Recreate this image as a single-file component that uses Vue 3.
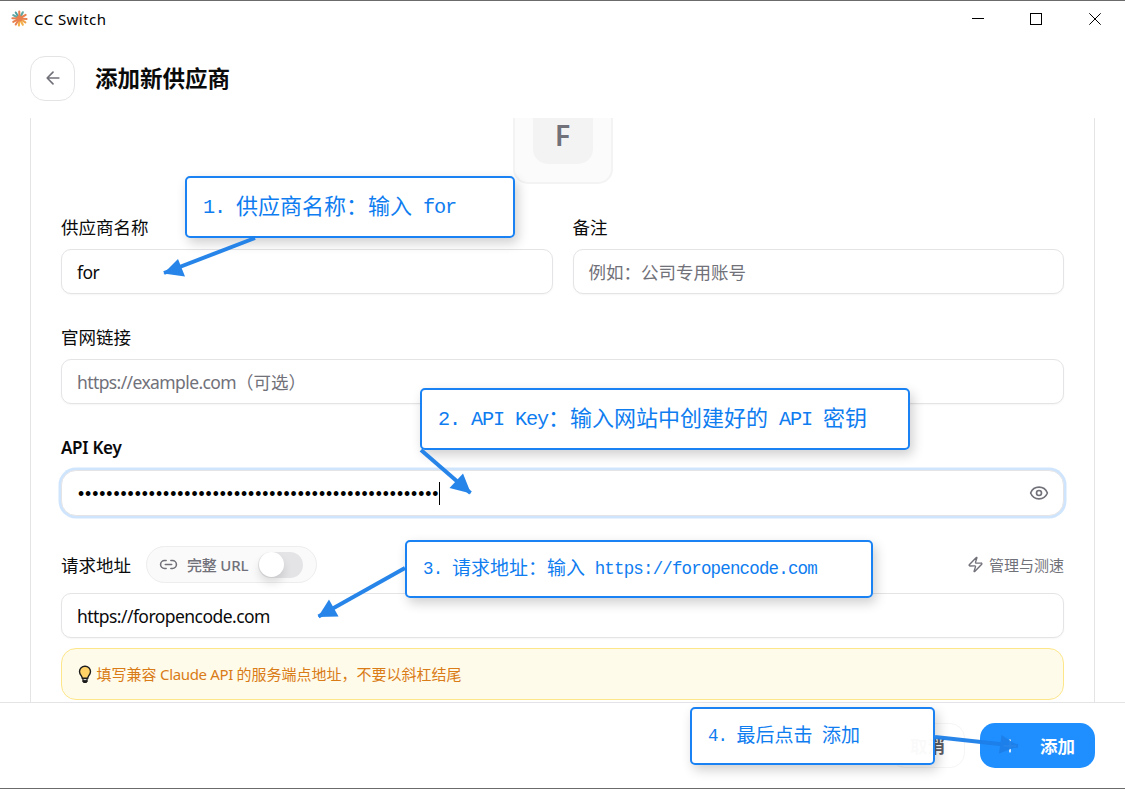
<script setup>
const steps = [
  { id: 1, parts: [{ t: '1. ' }, { t: '供应商名称：输入', cjk: true }, { t: ' for' }] },
  {
    id: 2,
    parts: [
      { t: '2. API Key' },
      { t: '：输入网站中创建好的', cjk: true },
      { t: ' API ' },
      { t: '密钥', cjk: true },
    ],
  },
  {
    id: 3,
    parts: [{ t: '3. ' }, { t: '请求地址：输入', cjk: true }, { t: ' https://foropencode.com' }],
  },
  {
    id: 4,
    parts: [{ t: '4. ' }, { t: '最后点击', cjk: true }, { t: ' ' }, { t: '添加', cjk: true }],
  },
]

const arrows = [
  { line: 'M255 238L164 273', head: '163.500,273.500 178,259 185,276.500' },
  { line: 'M421 450L470.500 493', head: '471,493.500 463,473.500 449.500,488' },
  { line: 'M405 568L318.500 616.500', head: '318,617 329,599.500 338.500,616.500' },
  { line: 'M935 737L1018 746', head: '1018.500,746 1001.500,735 999,753.500' },
]

const rays = [
  { angle: 208, color: '#5fa8a4' },
  { angle: 238, color: '#4f9fa0' },
  { angle: 298, color: '#5fa8a4' },
  { angle: 34, color: '#f0a04b' },
  { angle: 62, color: '#f2b04c' },
  { angle: 95, color: '#f2b04c' },
  { angle: 4, color: '#e8804f' },
  { angle: 122, color: '#e8804f' },
  { angle: 152, color: '#e8804f' },
  { angle: 182, color: '#e8804f' },
  { angle: 268, color: '#e8804f' },
  { angle: 330, color: '#e8804f' },
]

const maskedKey = '•'.repeat(51)
</script>

<template>
  <div class="window">
    <div class="titlebar">
      <svg class="app-logo" viewBox="0 0 18 18">
        <line
          v-for="ray in rays"
          :key="ray.angle"
          x1="9"
          y1="9"
          x2="16.500"
          y2="9"
          :stroke="ray.color"
          stroke-width="2.200"
          stroke-linecap="round"
          :transform="`rotate(${ray.angle} 9 9)`"
        />
        <circle cx="9" cy="9" r="3.200" fill="#e8804f" />
      </svg>
      <span class="app-name">CC Switch</span>
      <div class="window-controls">
        <svg viewBox="0 0 12 12" shape-rendering="crispEdges"><path d="M0 5.500H12" /></svg>
        <svg viewBox="0 0 12 12" shape-rendering="crispEdges"><path d="M.5 .5H11.500V11.500H.5Z" /></svg>
        <svg viewBox="0 0 12 12"><path d="M.3 .3L11.700 11.700M11.700 .3L.3 11.700" /></svg>
      </div>
    </div>

    <header class="page-header">
      <button class="back" type="button" aria-label="返回">
        <svg class="icon" viewBox="0 0 24 24">
          <path d="m12 19-7-7 7-7M19 12H5" />
        </svg>
      </button>
      <h1>添加新供应商</h1>
    </header>

    <main class="scroll-area">
      <div class="form-card">
        <div class="avatar"><div class="avatar-inner">F</div></div>

        <div class="row">
          <div class="field">
            <label>供应商名称</label>
            <div class="input"><span class="url">for</span></div>
          </div>
          <div class="field">
            <label>备注</label>
            <div class="input placeholder">例如：公司专用账号</div>
          </div>
        </div>

        <div class="field field-site">
          <label>官网链接</label>
          <div class="input placeholder"><span class="url">https://example.com</span>（可选）</div>
        </div>

        <div class="field field-key">
          <label class="latin">API Key</label>
          <div class="input focused">
            <span class="dots">{{ maskedKey }}</span><i class="caret"></i>
            <svg class="icon eye" viewBox="0 0 24 24">
              <path
                d="M2.062 12.348a1 1 0 0 1 0-.696 10.750 10.750 0 0 1 19.876 0 1 1 0 0 1 0 .696 10.750 10.750 0 0 1-19.876 0"
              />
              <circle cx="12" cy="12" r="3" />
            </svg>
          </div>
        </div>

        <div class="endpoint">
          <div class="endpoint-head">
            <label>请求地址</label>
            <div class="full-url">
              <svg class="icon link" viewBox="0 0 24 24">
                <path d="M9 17H7A5 5 0 0 1 7 7h2M15 7h2a5 5 0 1 1 0 10h-2M8 12h8" />
              </svg>
              <span>完整 URL</span>
              <div class="switch"><div class="thumb"></div></div>
            </div>
            <div class="manage">
              <svg class="icon" viewBox="0 0 24 24">
                <path
                  d="M4 14a1 1 0 0 1-.78-1.630l9.900-10.200a.5.5 0 0 1 .86.46l-1.920 6.020A1 1 0 0 0 13 10h7a1 1 0 0 1 .78 1.630l-9.900 10.200a.5.5 0 0 1-.86-.46l1.920-6.020A1 1 0 0 0 11 14z"
                />
              </svg>
              <span>管理与测速</span>
            </div>
          </div>
          <div class="input"><span class="url">https://foropencode.com</span></div>
          <div class="hint">
            <svg class="bulb" viewBox="0 0 14 19">
              <path
                d="M7 1.200a5.400 5.400 0 0 0-5.500 5.400c0 2.200 1.200 3.300 2.100 4.700.5.800.7 1.300.7 2h5.400c0-.7.2-1.200.7-2 .9-1.400 2.100-2.500 2.100-4.700A5.400 5.400 0 0 0 7 1.200z"
                fill="#ffd166"
                stroke="#1c1c1c"
                stroke-width="1.400"
              />
              <path d="M4.300 13h5.400v3.200L8.500 18h-3l-1.200-1.800z" fill="#1c1c1c" />
              <path d="M5.600 14.600h2.800" stroke="#e8e8e8" />
            </svg>
            <span>填写兼容<span class="hint-latin"> Claude API </span>的服务端点地址，不要以斜杠结尾</span>
          </div>
        </div>
      </div>
    </main>

    <footer class="page-footer">
      <button class="cancel" type="button">取消</button>
      <button class="submit" type="button">
        <svg class="icon" viewBox="0 0 24 24"><path d="M5 12h14M12 5v14" /></svg>
        <span>添加</span>
      </button>
    </footer>

    <div v-for="step in steps" :key="step.id" class="callout" :class="`callout-${step.id}`">
      <span v-for="(part, i) in step.parts" :key="i" :class="{ mono: !part.cjk }">{{ part.t }}</span>
    </div>

    <svg class="arrows" viewBox="0 0 1125 789">
      <g v-for="arrow in arrows" :key="arrow.line">
        <path :d="arrow.line" />
        <polygon :points="arrow.head" />
      </g>
    </svg>
  </div>
</template>

<style>
body {
  margin: 0;
  background: #ffffff;
}
</style>

<style scoped>
.window {
  position: relative;
  display: flex;
  flex-direction: column;
  box-sizing: border-box;
  width: 1125px;
  height: 789px;
  border-top: 1px solid #6b6b6b;
  border-bottom: 1px solid #6b6b6b;
  background: #ffffff;
  color: #0a0a0b;
  font-family: 'Noto Sans', 'Noto Sans CJK SC', sans-serif;
  font-size: 17.5px;
  overflow: hidden;
}

.window * {
  box-sizing: border-box;
}

button {
  font: inherit;
}

.icon {
  display: block;
  flex: none;
  width: 20px;
  height: 20px;
  fill: none;
  stroke: currentColor;
  stroke-width: 2;
  stroke-linecap: round;
  stroke-linejoin: round;
}

.titlebar {
  display: flex;
  align-items: center;
  flex: none;
  height: 37px;
  padding: 0 24px 2px 11px;
}

.app-logo {
  width: 17px;
  height: 17px;
}

.app-name {
  margin-left: 6px;
  color: #000000;
  font-size: 15px;
  letter-spacing: 0.45px;
}

.window-controls {
  display: flex;
  gap: 47px;
  margin-left: auto;
}

.window-controls svg {
  width: 12px;
  height: 12px;
  fill: none;
  stroke: #000000;
}

.window-controls svg:first-child {
  margin-right: -1px;
}

.page-header {
  display: flex;
  align-items: center;
  flex: none;
  height: 80px;
  padding-left: 30px;
  gap: 20px;
}

.back {
  display: flex;
  align-items: center;
  justify-content: center;
  width: 45px;
  height: 45px;
  padding: 0;
  border: 1px solid #e4e4e7;
  border-radius: 15px;
  background: #ffffff;
  color: #71717a;
}

h1 {
  margin: 0;
  padding-top: 2px;
  font-size: 22.5px;
  font-weight: 700;
  line-height: 28px;
}

.scroll-area {
  flex: none;
  height: 584px;
  padding: 0 30px;
  overflow: hidden;
}

.form-card {
  display: flex;
  flex-direction: column;
  height: 640px;
  padding: 0 30px;
  border: solid #e4e4e7;
  border-width: 0 1px;
}

/* The top of the avatar is scrolled under the header */
.avatar {
  align-self: center;
  flex: none;
  width: 100px;
  height: 100px;
  margin-top: -34px;
  padding: 18px;
  border: 2px solid #f3f3f4;
  border-radius: 15px;
  background: #fbfbfb;
}

.avatar-inner {
  display: flex;
  align-items: center;
  justify-content: center;
  height: 60px;
  padding-top: 2px;
  border-radius: 15px;
  background: #f3f3f4;
  color: #71717a;
  font-size: 29px;
  font-weight: 600;
  line-height: 30px;
}

.row {
  display: grid;
  grid-template-columns: 1fr 1fr;
  gap: 20px;
  margin-top: 34px;
}

.field {
  display: flex;
  flex-direction: column;
  gap: 13px;
}

label {
  height: 18px;
  line-height: 18px;
}

.latin {
  font-weight: 600;
  font-size: 17px;
  line-height: 20px;
  letter-spacing: -0.3px;
}

.input {
  display: flex;
  align-items: center;
  height: 45px;
  padding: 0 15px;
  border: 1px solid #e4e4e7;
  border-radius: 10px;
  background: #ffffff;
  box-shadow: 0 1px 2px rgba(0, 0, 0, 0.04);
}

.placeholder {
  color: #71717a;
}

.placeholder .url {
  letter-spacing: -0.6px;
}

.url {
  letter-spacing: -0.55px;
}

.field-site {
  margin-top: 34px;
}

.field-key {
  margin-top: 34px;
}

.focused {
  height: 46px;
  margin-top: 1px;
  padding: 0 14px 0 16px;
  border-radius: 15px;
  box-shadow: 0 0 0 2.5px #cfe5fd;
}

.dots {
  padding-top: 3px;
  color: #000000;
  font-family: 'Liberation Sans', sans-serif;
  font-size: 17.5px;
  letter-spacing: 0.96px;
}

.caret {
  width: 1px;
  height: 23px;
  background: #000000;
}

.eye {
  margin-left: auto;
  color: #71717a;
}

.endpoint {
  display: flex;
  flex-direction: column;
  margin-top: 30px;
  gap: 10px;
}

.endpoint-head {
  display: flex;
  align-items: center;
  height: 37px;
}

.full-url {
  display: flex;
  align-items: center;
  width: 171px;
  height: 37px;
  margin-left: 15px;
  padding-left: 12px;
  border: 1px solid #ededee;
  border-radius: 19px;
  background: #fafafa;
  color: #71717a;
  font-size: 15px;
  font-weight: 500;
  letter-spacing: -0.2px;
}

.link {
  width: 19px;
  height: 19px;
  margin-right: 9px;
}

.switch {
  width: 45px;
  height: 26px;
  margin-left: 10px;
  border-radius: 13px;
  background: #e4e4e7;
}

.thumb {
  width: 25px;
  height: 25px;
  margin-left: 1px;
  border-radius: 50%;
  background: #ffffff;
  box-shadow: 0 6px 10px rgba(0, 0, 0, 0.12);
}

.manage {
  display: flex;
  align-items: center;
  margin-left: auto;
  gap: 5px;
  color: #71717a;
  font-size: 15px;
}

.manage .icon {
  width: 17px;
  height: 17px;
}

.hint {
  display: flex;
  align-items: center;
  height: 52px;
  padding-left: 15.5px;
  padding-bottom: 1px;
  gap: 5px;
  border: 1px solid #fde68a;
  border-radius: 15px;
  background: #fffbeb;
  color: #d97b16;
  font-size: 15px;
}

.hint-latin {
  letter-spacing: -0.35px;
}

.bulb {
  width: 14px;
  height: 19px;
  margin-top: 1px;
}

.page-footer {
  display: flex;
  align-items: flex-start;
  justify-content: flex-end;
  flex: 1;
  padding: 20px 30px 0;
  gap: 15px;
  border-top: 1px solid #e4e4e7;
}

.cancel,
.submit {
  height: 45px;
  border-radius: 15px;
  font-weight: 600;
}

.cancel {
  width: 75px;
  padding: 0;
  border: 1px solid #f5f5f6;
  background: #ffffff;
  color: #5c5c64;
}

.submit {
  display: flex;
  align-items: center;
  width: 115px;
  padding: 0 20px;
  gap: 20px;
  border: 0;
  background: #1f8fff;
  color: #ffffff;
}

.callout {
  position: absolute;
  padding-left: 16px;
  border: 2px solid #1a82f2;
  border-radius: 5px;
  background: rgba(255, 255, 255, 0.97);
  box-shadow: 3px 5px 12px rgba(0, 0, 0, 0.19);
  color: #0f7df0;
  font-family: 'Noto Sans CJK SC', sans-serif;
  white-space: pre;
}

/* Latin glyphs take half of a CJK cell: 0.92em * 0.6 advance, tightened back to 0.5em */
.mono {
  font-family: 'Liberation Mono', monospace;
  font-size: 0.92em;
  line-height: 1;
  letter-spacing: -0.0565em;
  vertical-align: 1px;
}

.callout-1 {
  left: 185px;
  top: 175px;
  width: 330px;
  height: 62px;
  font-size: 22px;
  line-height: 52px;
}

.callout-2 {
  left: 420px;
  top: 387px;
  width: 490px;
  height: 62px;
  font-size: 22px;
  line-height: 52px;
}

.callout-3 {
  left: 405px;
  top: 539px;
  width: 468px;
  height: 58px;
  font-size: 19px;
  line-height: 49px;
}

.callout-3 .mono {
  letter-spacing: -0.047em;
}

.callout-4 {
  left: 690px;
  top: 706px;
  width: 245px;
  height: 58px;
  font-size: 19px;
  line-height: 49px;
}

.arrows {
  position: absolute;
  left: 0;
  top: -1px;
  width: 1125px;
  height: 789px;
  fill: #1c7fe9;
  opacity: 0.95;
  pointer-events: none;
}

.arrows path {
  fill: none;
  stroke: #1c7fe9;
  stroke-width: 4;
}
</style>
